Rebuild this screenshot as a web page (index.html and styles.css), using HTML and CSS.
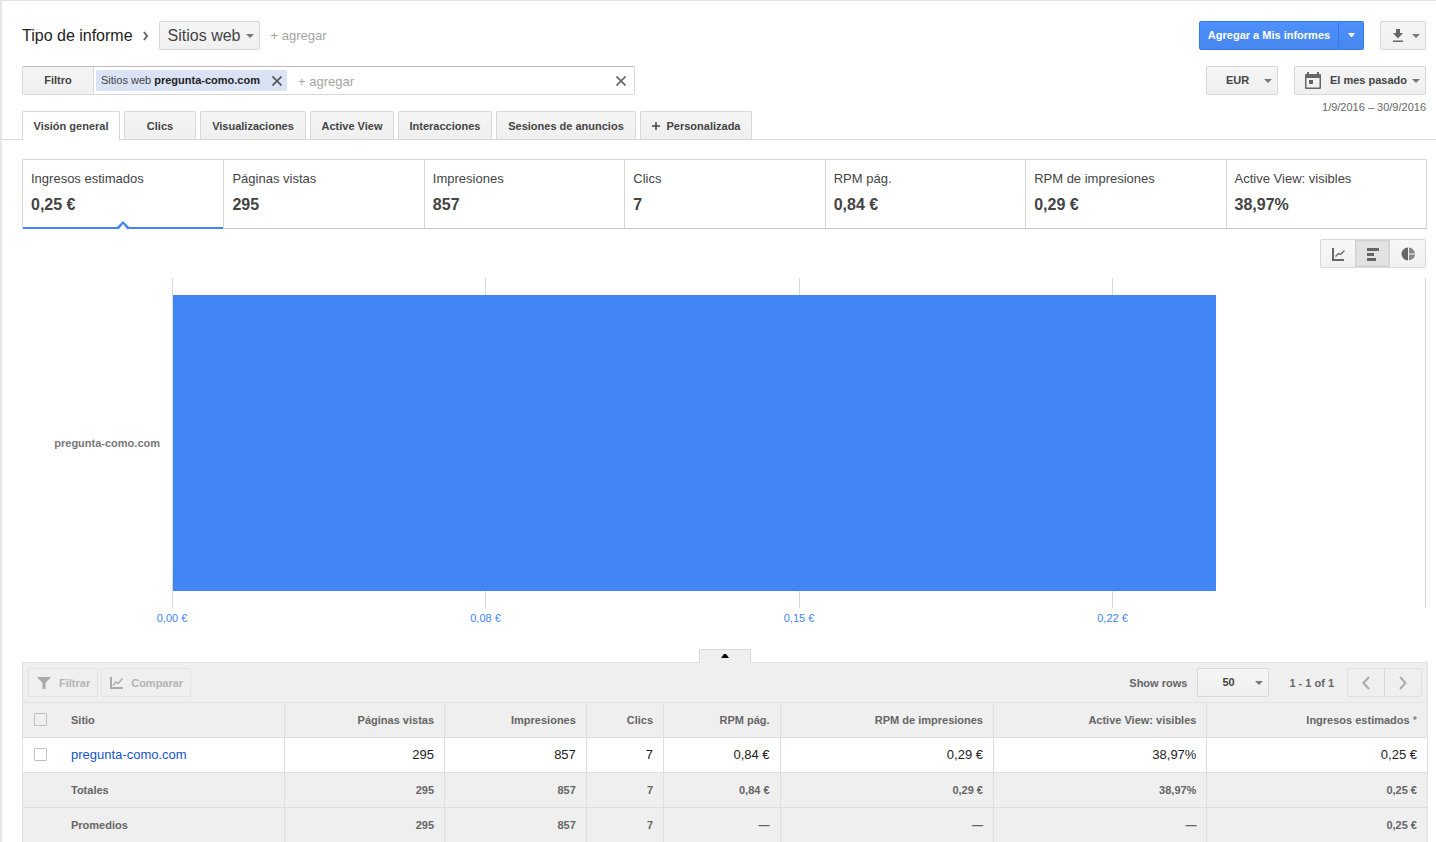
FILE: index.html
```html
<!DOCTYPE html>
<html lang="es">
<head>
<meta charset="utf-8">
<title>Informe: Sitios web</title>
<link rel="stylesheet" href="styles.css">
</head>
<body>
<main class="page">
  <header class="header">
    <div class="header-left">
      <div class="row">
        <h1 class="title" id="report-type">Tipo de informe</h1>
        <svg class="chevron" width="6" height="10" viewBox="0 0 6 10"><path d="M1 1l3 4-3 4" fill="none" stroke="#666" stroke-width="2"/></svg>
        <div class="picker picker-report">
          <select class="select" aria-labelledby="report-type"><option>Sitios web</option></select>
          <svg class="arrow" width="8" height="4" viewBox="0 0 8 4"><path d="M0 0h8L4 4z"/></svg>
        </div>
        <button class="add" type="button">+ agregar</button>
      </div>
      <div class="filter">
        <label class="filter-label" for="filter-input">Filtro</label>
        <div class="chip">
          <span>Sitios web <b>pregunta-como.com</b></span>
          <button class="clear" type="button" aria-label="Quitar filtro"><svg width="10" height="10" viewBox="0 0 10 10"><path d="M.5.5l9 9M9.500.5l-9 9" fill="none" stroke="#555" stroke-width="1.700"/></svg></button>
        </div>
        <input class="filter-input" id="filter-input" type="text" placeholder="+ agregar">
        <button class="clear clear-all" type="button" aria-label="Borrar filtros"><svg width="10" height="10" viewBox="0 0 10 10"><path d="M.5.5l9 9M9.500.5l-9 9" fill="none" stroke="#666" stroke-width="1.700"/></svg></button>
      </div>
      <nav class="tabs">
        <button class="tab tab-active" type="button">Visión general</button>
        <button class="tab" type="button">Clics</button>
        <button class="tab" type="button">Visualizaciones</button>
        <button class="tab" type="button">Active View</button>
        <button class="tab" type="button">Interacciones</button>
        <button class="tab" type="button">Sesiones de anuncios</button>
        <button class="tab" type="button"><svg width="8" height="8" viewBox="0 0 8 8"><path d="M0 4h8M4 0v8" stroke="#444" stroke-width="1.500"/></svg>Personalizada</button>
      </nav>
    </div>
    <div class="header-right">
      <div class="row actions">
        <div class="split">
          <button class="primary" type="button">Agregar a Mis informes</button>
          <button class="primary primary-menu" type="button" aria-label="Más opciones"><svg width="7" height="4" viewBox="0 0 7 4"><path d="M0 0h7L4 4H3z" fill="#fff"/></svg></button>
        </div>
        <button class="btn download" type="button" aria-label="Descargar">
          <svg width="12" height="13" viewBox="0 0 12 13"><path d="M4 0h4v4h3L6 9.500 1 4h3zM1 11.500h10V13H1z" fill="#666"/></svg>
          <svg class="tri" width="8" height="4" viewBox="0 0 8 4"><path d="M0 0h8L4 4z"/></svg>
        </button>
      </div>
      <div class="row actions">
        <div class="picker picker-small">
          <select class="select" aria-label="Moneda"><option>EUR</option></select>
          <svg class="arrow" width="8" height="4" viewBox="0 0 8 4"><path d="M0 0h8L4 4z"/></svg>
        </div>
        <button class="btn period" type="button">
          <svg width="16" height="18" viewBox="0 0 16 18"><path fill="#666" fill-rule="evenodd" d="M2 0h2v2h8V0h2v2h1q1 0 1 1v13q0 1-1 1H1q-1 0-1-1V3q0-1 1-1h1zM1.500 6v9.500h13V6z"/><path fill="#666" d="M4 8h4v4H4z"/></svg>
          <span>El mes pasado</span>
          <svg class="tri" width="8" height="4" viewBox="0 0 8 4"><path d="M0 0h8L4 4z"/></svg>
        </button>
      </div>
      <p class="dates">1/9/2016 – 30/9/2016</p>
    </div>
  </header>

  <section class="metrics">
    <button class="metric metric-active" type="button"><span>Ingresos estimados</span><b>0,25 €</b>
      <svg class="notch" width="12" height="8" viewBox="0 0 12 8"><path d="M0 8V6l6-6 6 6v2z" fill="#4285f4"/><path d="M2 8l4-5 4 5z" fill="#fff"/></svg></button>
    <button class="metric" type="button"><span>Páginas vistas</span><b>295</b></button>
    <button class="metric" type="button"><span>Impresiones</span><b>857</b></button>
    <button class="metric" type="button"><span>Clics</span><b>7</b></button>
    <button class="metric" type="button"><span>RPM pág.</span><b>0,84 €</b></button>
    <button class="metric" type="button"><span>RPM de impresiones</span><b>0,29 €</b></button>
    <button class="metric" type="button"><span>Active View: visibles</span><b>38,97%</b></button>
  </section>

  <div class="views">
    <button class="view" type="button" aria-label="Líneas"><svg width="14" height="14" viewBox="0 0 14 14"><path d="M2 1v12h11" fill="none" stroke="#666" stroke-width="2"/><path d="M4.500 9.500l3-3 2 1 4-4" fill="none" stroke="#666" stroke-width="1.300"/></svg></button>
    <button class="view view-on" type="button" aria-label="Barras"><svg width="14" height="14" viewBox="0 0 14 14"><path d="M1 1h12v3H1zM1 6h7v3H1zM1 11h9v3H1z" fill="#666"/></svg></button>
    <button class="view" type="button" aria-label="Circular"><svg width="14" height="14" viewBox="0 0 14 14"><path d="M7 .5v13a6.500 6.500 0 0 1 0-13z" fill="#666"/><path d="M8 .5a6.500 6.500 0 0 1 6 6H8zM8 7.500h6a6.500 6.500 0 0 1-6 6z" fill="#888"/></svg></button>
  </div>

  <section class="chart">
    <div class="category">pregunta-como.com</div>
    <div class="plot">
      <div class="gridlines"><i></i><i></i><i></i><i></i></div>
      <div class="bars"><div class="bar" style="width:83.3%"></div></div>
    </div>
    <div class="axis"><span>0,00 €</span><span>0,08 €</span><span>0,15 €</span><span>0,22 €</span></div>
  </section>

  <section class="panel">
    <button class="collapse" type="button" aria-label="Contraer gráfico"><svg width="8" height="4" viewBox="0 0 8 4"><path d="M0 4l3-4h2l3 4z"/></svg></button>
    <div class="toolbar">
      <button class="ghost" type="button" disabled><svg width="14" height="13" viewBox="0 0 14 13"><path d="M0 1h14L8.500 7v6h-3V7z" fill="#aaa"/></svg>Filtrar</button>
      <button class="ghost" type="button" disabled><svg width="13" height="13" viewBox="0 0 13 13"><path d="M1 1v11h12" fill="none" stroke="#aaa" stroke-width="2"/><path d="M3 9.500l3-3.500 2 1.500 4.500-5" fill="none" stroke="#aaa" stroke-width="1.300"/></svg>Comparar</button>
      <label class="rows-label" for="rows">Show rows</label>
      <div class="picker picker-small">
        <select class="select" id="rows"><option>50</option></select>
        <svg class="arrow" width="8" height="4" viewBox="0 0 8 4"><path d="M0 0h8L4 4z"/></svg>
      </div>
      <span class="range">1 - 1 of 1</span>
      <div class="pager">
        <button class="page-btn" type="button" disabled aria-label="Anterior"><svg width="8" height="14" viewBox="0 0 8 14"><path d="M7 1L1.500 7 7 13" fill="none" stroke="#aaa" stroke-width="2"/></svg></button>
        <button class="page-btn" type="button" disabled aria-label="Siguiente"><svg width="8" height="14" viewBox="0 0 8 14"><path d="M1 1l5.500 6L1 13" fill="none" stroke="#aaa" stroke-width="2"/></svg></button>
      </div>
    </div>
    <table class="table">
      <colgroup><col class="c-check"><col class="c-site"><col class="c-views"><col class="c-impr"><col class="c-clicks"><col class="c-rpm"><col class="c-rpmi"><col class="c-active"><col></colgroup>
      <thead>
        <tr><th><input class="check" type="checkbox" aria-label="Seleccionar todo"></th><th class="site">Sitio</th><th>Páginas vistas</th><th>Impresiones</th><th>Clics</th><th>RPM pág.</th><th>RPM de impresiones</th><th>Active View: visibles</th><th>Ingresos estimados <span class="star">*</span></th></tr>
      </thead>
      <tbody>
        <tr><td><input class="check" type="checkbox" aria-label="Seleccionar pregunta-como.com"></td><td class="site"><a class="link" href="#">pregunta-como.com</a></td><td>295</td><td>857</td><td>7</td><td>0,84 €</td><td>0,29 €</td><td>38,97%</td><td>0,25 €</td></tr>
      </tbody>
      <tfoot>
        <tr><td></td><th class="site">Totales</th><td>295</td><td>857</td><td>7</td><td>0,84 €</td><td>0,29 €</td><td>38,97%</td><td>0,25 €</td></tr>
        <tr><td></td><th class="site">Promedios</th><td>295</td><td>857</td><td>7</td><td>—</td><td>—</td><td>—</td><td>0,25 €</td></tr>
      </tfoot>
    </table>
  </section>
</main>
</body>
</html>
```
FILE: styles.css
```css
* { box-sizing: border-box; }
body {
  margin: 0;
  font-family: "Liberation Sans", Arial, sans-serif;
  font-size: 11px;
  color: #444;
  background: #fff;
}
button, input, select { font: inherit; color: inherit; margin: 0; }
button { padding: 0; border: 0; background: none; }
svg { display: block; flex: none; }

.page {
  min-height: 100vh;
  border-top: 1px solid #e2e2e2;
  border-left: 2px solid #e6e6e6;
}

/* Header */
.header {
  display: flex;
  justify-content: space-between;
  padding: 20px 10px 0 20px;
  border-bottom: 1px solid #d8d8d8;
}
.header-left { display: flex; flex-direction: column; gap: 16px; }
.row { display: flex; align-items: center; height: 29px; }
.title { margin: 0; font-size: 16px; font-weight: normal; color: #222; }
.chevron { margin: 0 10px 0 10px; }

.btn, .picker {
  height: 29px;
  border: 1px solid #d8d8d8;
  border-radius: 2px;
  background: linear-gradient(#f5f5f5, #f0f0f0);
}
.btn { display: flex; align-items: center; font-weight: bold; }
.tri, .arrow { fill: #777; }
.picker { position: relative; font-weight: bold; }
.select {
  appearance: none;
  width: 100%;
  height: 100%;
  border: 0;
  background: transparent;
}
.arrow { position: absolute; right: 5px; top: 12px; pointer-events: none; }
.picker-report { width: 101px; font-size: 16px; font-weight: normal; }
.picker-report .select { padding: 0 0 0 8px; }
.picker-small { width: 72px; }
.picker-small .select { padding: 0 16px 2px 19px; color: #444; }
.toolbar .picker-small .select { padding-left: 24px; }
.add { margin-left: 11px; font-size: 13px; color: #a5a5a5; }

.filter {
  display: flex;
  align-items: center;
  width: 613px;
  height: 29px;
  border: 1px solid #d8d8d8;
  border-top-color: #bbb;
  border-radius: 2px;
}
.filter-label {
  width: 71px;
  line-height: 27px;
  text-align: center;
  font-weight: bold;
  border-right: 1px solid #d8d8d8;
  background: linear-gradient(#f5f5f5, #f0f0f0);
}
.chip {
  display: flex;
  align-items: center;
  justify-content: space-between;
  width: 191px;
  height: 21px;
  margin-left: 2px;
  padding: 0 5px;
  border-radius: 2px;
  background: #dae3f6;
}
.chip span { padding-bottom: 2px; }
.chip b { color: #222; }
.filter-input {
  flex: 1;
  min-width: 0;
  border: 0;
  outline: 0;
  padding: 2px 11px 0;
  font-size: 13px;
  background: transparent;
}
.filter-input::placeholder { color: #a5a5a5; opacity: 1; }
.clear-all { margin-right: 8px; }

.tabs {
  display: grid;
  grid-template-columns: 98px 72px 106px 84px 94px 140px 112px;
  gap: 4px;
}
.tab {
  display: flex;
  align-items: center;
  justify-content: center;
  gap: 7px;
  height: 28px;
  border: 1px solid #d8d8d8;
  border-bottom: 0;
  border-radius: 2px 2px 0 0;
  font-weight: bold;
  white-space: nowrap;
  background: linear-gradient(#f5f5f5, #efefef);
}
.tab-active { height: 29px; margin-bottom: -1px; background: #fff; }

.header-right { display: flex; flex-direction: column; align-items: flex-end; }
.actions { gap: 16px; margin-bottom: 16px; }
.actions + .actions { margin-bottom: 6px; }
.split { display: flex; }
.primary {
  width: 140px;
  height: 29px;
  padding-bottom: 2px;
  border: 1px solid #3079ed;
  border-radius: 2px 0 0 2px;
  font-weight: bold;
  color: #fff;
  background: linear-gradient(#4d90fe, #4787ed);
}
.primary-menu {
  display: grid;
  place-items: center;
  width: 25px;
  border-left: 0;
  border-radius: 0 2px 2px 0;
}
.download { width: 46px; padding: 0 5px 0 11px; justify-content: space-between; }
.period { width: 132px; padding: 0 5px 0 10px; justify-content: space-between; }
.period span { margin-left: 4px; padding-bottom: 2px; }
.dates { margin: 0; line-height: 13px; color: #666; }

/* Metrics */
.metrics {
  display: grid;
  grid-template-columns: repeat(7, 1fr);
  margin: 19px 9px 0 20px;
  border: 1px solid #d8d8d8;
  border-bottom-color: #c8c8c8;
}
.metric {
  display: flex;
  flex-direction: column;
  gap: 9px;
  height: 68px;
  padding: 11px 8px 0;
  text-align: left;
  font-size: 13px;
  line-height: 16px;
}
.metric + .metric { border-left: 1px solid #d8d8d8; }
.metric b { font-size: 16px; line-height: 18px; }
.metric-active {
  position: relative;
  height: 69px;
  margin-bottom: -1px;
  border-bottom: 2px solid #4285f4;
}
.notch { position: absolute; left: calc(50% - 6px); bottom: -2px; }

/* Chart type switch */
.views {
  display: flex;
  width: max-content;
  margin: 10px 10px 0 auto;
  border: 1px solid #d8d8d8;
  border-radius: 2px;
}
.view {
  display: grid;
  place-items: center;
  width: 35px;
  height: 27px;
  background: linear-gradient(#f7f7f7, #f1f1f1);
}
.view:first-child { width: 34px; }
.view-on { background: #e2e2e2; box-shadow: inset 0 0 2px 1px #ccc; }

/* Chart */
.chart {
  display: grid;
  grid-template-columns: 150px 1fr;
  margin: 10px 10px 0 20px;
}
.category {
  align-self: center;
  padding-right: 12px;
  text-align: right;
  font-weight: bold;
  color: #777;
}
.plot { display: grid; height: 330px; }
.gridlines, .bars { grid-area: 1 / 1; }
.gridlines {
  display: grid;
  grid-template-columns: repeat(4, 1fr);
  border-right: 1px solid #d8d8d8;
}
.gridlines i { border-left: 1px solid #d8d8d8; }
.bars { z-index: 1; padding: 17px 1px; }
.bar { height: 100%; background: #4285f4; }
.axis {
  grid-column: 2;
  display: grid;
  grid-template-columns: repeat(4, 1fr);
  margin: 4px 12.5% 0 -12.5%;
  text-align: center;
  line-height: 13px;
  color: #4285f4;
}

/* Table panel */
.panel {
  margin: 24px 8px 0 20px;
  color: #666;
}
.collapse {
  position: relative;
  display: grid;
  place-items: center;
  width: 52px;
  height: 14px;
  margin: 0 auto -1px;
  padding-bottom: 2px;
  border: 1px solid #d8d8d8;
  border-bottom: 0;
  background: #efefef;
}
.toolbar {
  display: flex;
  align-items: center;
  height: 40px;
  padding: 0 5px;
  border: 1px solid #e2e2e2;
  border-bottom: 0;
  font-weight: bold;
  background: #efefef;
}
.ghost {
  display: flex;
  align-items: center;
  gap: 8px;
  height: 29px;
  margin-right: 3px;
  padding: 0 7px 0 8px;
  border: 1px solid #e3e3e3;
  border-radius: 2px;
  color: #b5b5b5;
}
.rows-label { margin: 0 10px 0 auto; }
.range { margin: 0 13px 0 20px; }
.pager { display: flex; border: 1px solid #e0e0e0; border-radius: 2px; }
.page-btn { display: grid; place-items: center; width: 36px; height: 27px; }
.page-btn + .page-btn { width: 37px; border-left: 1px solid #d8d8d8; }

.table {
  width: 100%;
  table-layout: fixed;
  border-collapse: separate;
  border-spacing: 0;
  border: solid #e2e2e2;
  border-width: 0 1px;
  background: #efefef;
}
.c-check { width: 40px; }
.c-site { width: 222px; }
.c-views { width: 11.4%; }
.c-impr { width: 10.1%; }
.c-clicks { width: 5.5%; }
.c-rpm { width: 8.3%; }
.c-rpmi { width: 15.2%; }
.c-active { width: 15.2%; }
.table th, .table td {
  height: 35px;
  padding: 0 10px 0 0;
  text-align: right;
  font-weight: bold;
  border-top: 1px solid #dedede;
  border-right: 1px solid #dedede;
}
.table thead th { border-top-color: #e3e3e3; }
.table tbody td { padding-bottom: 2px; }
.table th:first-child, .table td:first-child { border-right: 0; padding: 0 0 2px 11px; text-align: left; }
.table th:last-child, .table td:last-child { border-right: 0; }
.table .site { padding-left: 8px; text-align: left; }
.table tbody td {
  font-size: 13px;
  font-weight: normal;
  color: #222;
  background: #fff;
}
.check {
  appearance: none;
  display: block;
  width: 13px;
  height: 13px;
  border: 1px solid #c0c0c0;
  border-radius: 1px;
  background: transparent;
}
.link { color: #15c; text-decoration: none; }
.star { font-weight: normal; }
```
